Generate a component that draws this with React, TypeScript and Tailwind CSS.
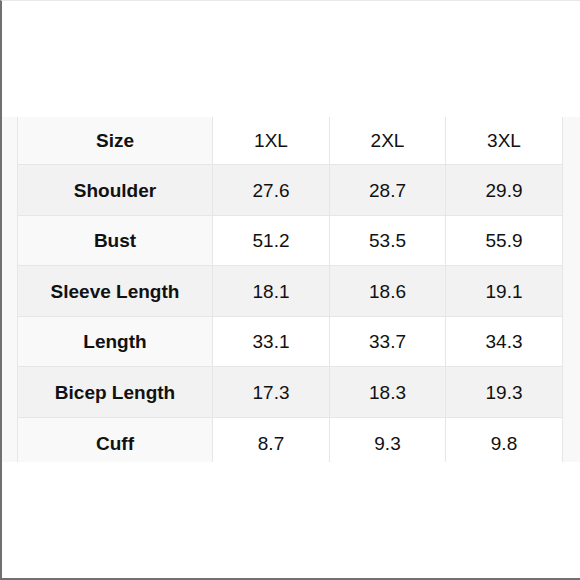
const rows = [
  { label: "Size", values: ["1XL", "2XL", "3XL"], h: "h-[48px]" },
  { label: "Shoulder", values: ["27.6", "28.7", "29.9"], h: "h-[51px]" },
  { label: "Bust", values: ["51.2", "53.5", "55.9"], h: "h-[50px]" },
  { label: "Sleeve Length", values: ["18.1", "18.6", "19.1"], h: "h-[51px]" },
  { label: "Length", values: ["33.1", "33.7", "34.3"], h: "h-[50px]" },
  { label: "Bicep Length", values: ["17.3", "18.3", "19.3"], h: "h-[51px]" },
  { label: "Cuff", values: ["8.7", "9.3", "9.8"], h: "h-[50px]" },
];

export default function App() {
  return (
    <div className="w-[580px] h-[580px] bg-white border-l-2 border-b-2 border-[#707070] border-t border-t-[#e8e8e8] pt-[116px] font-['Liberation_Sans',Arial,sans-serif] text-[19px] text-[#111111]">
      <div className="flex h-[345px] overflow-hidden">
        {/* side strips */}
        <div className="w-[16px] bg-[#f8f8f8] border-r border-[#e6e6e6]" />

        <div className="w-[545px]">
          {rows.map((row, i) => {
            const shaded = i % 2 === 1;
            const last = i === rows.length - 1;
            return (
              <div
                key={row.label}
                className={`grid grid-cols-[195px_117px_116px_117px] ${row.h} ${last ? "" : "border-b border-[#e6e6e6]"} ${shaded ? "bg-[#f2f2f2]" : "bg-white"}`}
              >
                <div
                  className={`flex items-center justify-center pt-[2px] font-bold border-r border-[#e6e6e6] ${shaded ? "bg-[#f2f2f2]" : "bg-[#f9f9f9]"}`}
                >
                  {row.label}
                </div>
                {row.values.map((v, j) => (
                  <div
                    key={j}
                    className="flex items-center justify-center pt-[2px] border-r border-[#e6e6e6]"
                  >
                    {v}
                  </div>
                ))}
              </div>
            );
          })}
        </div>

        <div className="flex-1 bg-[#f8f8f8]" />
      </div>
    </div>
  );
}
